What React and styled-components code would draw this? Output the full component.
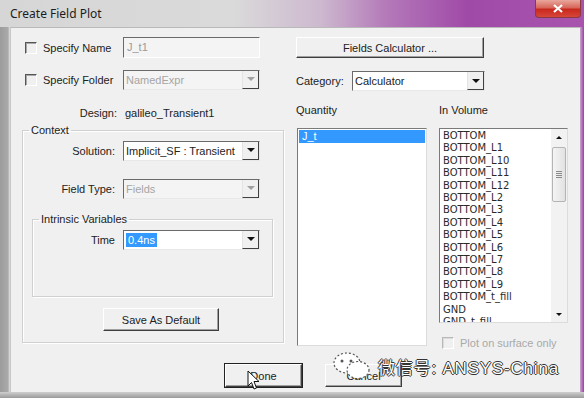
import React from 'react';
import styled, { createGlobalStyle } from 'styled-components';

const GlobalStyle = createGlobalStyle`
  * { box-sizing: border-box; }
  html, body { margin: 0; padding: 0; background: #f0f0f0; }
  body {
    font-family: 'Liberation Sans', Arial, sans-serif;
    font-size: 11px;
    color: #222;
  }
`;

const volumes = [
  'BOTTOM', 'BOTTOM_L1', 'BOTTOM_L10', 'BOTTOM_L11', 'BOTTOM_L12', 'BOTTOM_L2',
  'BOTTOM_L3', 'BOTTOM_L4', 'BOTTOM_L5', 'BOTTOM_L6', 'BOTTOM_L7', 'BOTTOM_L8',
  'BOTTOM_L9', 'BOTTOM_t_fill', 'GND', 'GND_t_fill',
];

function Combo({ value, width, disabled, selected }) {
  return (
    <ComboBox $w={width} $disabled={disabled}>
      <ComboText $disabled={disabled}>
        {selected ? <Selection>{value}</Selection> : value}
      </ComboText>
      <DropButton>
        <Arrow $disabled={disabled} />
      </DropButton>
    </ComboBox>
  );
}

function Check({ label, disabled }) {
  return (
    <CheckRow $disabled={disabled}>
      <CheckBox $disabled={disabled} />
      <span>{label}</span>
    </CheckRow>
  );
}

export default function App() {
  return (
    <>
      <GlobalStyle />
      <Window>
        <TitleBar>
          <Title>Create Field Plot</Title>
          <CloseButton>
            <svg width="10" height="9" viewBox="0 0 10 9">
              <path d="M1 1 L9 8 M9 1 L1 8" stroke="#fff" strokeWidth="2.2" />
            </svg>
          </CloseButton>
        </TitleBar>

        <Middle>
          <LeftFrame />
          <Client>
            <LeftCol>
              <FieldRow $label={101}>
                <Check label="Specify Name" />
                <TextField>J_t1</TextField>
              </FieldRow>
              <FieldRow $label={101} $top={11}>
                <Check label="Specify Folder" />
                <Combo value="NamedExpr" width={137} disabled />
              </FieldRow>
              <InfoRow>
                <InfoLabel>Design:</InfoLabel>
                <span>galileo_Transient1</span>
              </InfoRow>

              <Group $w={262} $top={5} $pb={11}>
                <Legend>Context</Legend>
                <FieldRow $label={100} $top={0}>
                  <RowLabel>Solution:</RowLabel>
                  <Combo value="Implicit_SF : Transient" width={137} />
                </FieldRow>
                <FieldRow $label={100} $top={17}>
                  <RowLabel>Field Type:</RowLabel>
                  <Combo value="Fields" width={137} disabled />
                </FieldRow>

                <Group $w={241} $top={14} $pb={46} $left={9}>
                  <Legend>Intrinsic Variables</Legend>
                  <FieldRow $label={90} $top={0}>
                    <RowLabel>Time</RowLabel>
                    <Combo value="0.4ns" width={137} selected />
                  </FieldRow>
                </Group>

                <Button $w={116} $h={23} $left={80} $top={11}>Save As Default</Button>
              </Group>
            </LeftCol>

            <RightCol>
              <Button $w={188} $h={21}>Fields Calculator ...</Button>
              <CategoryRow>
                <CategoryLabel>Category:</CategoryLabel>
                <Combo value="Calculator" width={133} />
              </CategoryRow>

              <ListsGrid>
                <span>Quantity</span>
                <span>In Volume</span>
                <QuantityList>
                  <SelectedItem>J_t</SelectedItem>
                </QuantityList>
                <VolumeCol>
                  <VolumeList>
                    <Items>
                      {volumes.map(v => <Item key={v}>{v}</Item>)}
                    </Items>
                    <ScrollBar>
                      <ScrollArrow><Arrow $up $small /></ScrollArrow>
                      <Track>
                        <Thumb><Grip /></Thumb>
                      </Track>
                      <ScrollArrow><Arrow $small /></ScrollArrow>
                    </ScrollBar>
                  </VolumeList>
                  <PlotCheck>
                    <Check label="Plot on surface only" disabled />
                  </PlotCheck>
                </VolumeCol>
              </ListsGrid>
            </RightCol>

            <BottomButtons>
              <DefaultButton>Done</DefaultButton>
              <Button $w={77} $h={23}>Cancel</Button>
            </BottomButtons>
          </Client>
          <RightFrame />
        </Middle>
        <BottomFrame />

        <Watermark>
          <svg width="40" height="30" viewBox="0 0 40 30">
            <ellipse cx="15" cy="12" rx="13" ry="10" fill="#fff" stroke="#555" strokeWidth="1.2" strokeDasharray="2 2" />
            <ellipse cx="26" cy="19" rx="11" ry="8.5" fill="#fff" stroke="#555" strokeWidth="1.2" strokeDasharray="2 2" />
            <circle cx="10" cy="10" r="1.5" fill="#555" />
            <circle cx="19" cy="10" r="1.5" fill="#555" />
          </svg>
          <WatermarkText>微信号: ANSYS-China</WatermarkText>
        </Watermark>

        <Cursor width="14" height="21" viewBox="0 0 14 21">
          <path d="M1 1 L1 16 L4.5 12.5 L7 19 L9.5 18 L7 11.5 L12 11.5 Z" fill="#fff" stroke="#111" strokeWidth="1" strokeLinejoin="round" />
        </Cursor>
      </Window>
    </>
  );
}

const Window = styled.div`
  position: relative;
  width: 584px;
  height: 398px;
  display: flex;
  flex-direction: column;
  overflow: hidden;
  background: #d8d8d8;
`;

const TitleBar = styled.div`
  height: 27px;
  display: flex;
  align-items: flex-start;
  padding-left: 10px;
  background: linear-gradient(90deg, #d6d6d6 0%, #dadada 40%, #cdb8cf 55%, #b47ab9 66%, #a04aa8 80%, #a854ae 100%);
`;

const Title = styled.div`
  font-family: 'Noto Sans', 'Liberation Sans', sans-serif;
  font-size: 12px;
  color: #1c1c1c;
  margin-top: 5px;
`;

const CloseButton = styled.div`
  margin-left: auto;
  margin-right: 3px;
  width: 46px;
  height: 18px;
  display: flex;
  align-items: center;
  justify-content: center;
  border-radius: 0 0 4px 4px;
  border: 1px solid #8a3a40;
  border-top: none;
  background: linear-gradient(180deg, #e9a79d 0%, #d7675a 45%, #c8291d 55%, #d8463a 100%);
`;

const Middle = styled.div`
  flex: 1;
  display: flex;
`;

const LeftFrame = styled.div`
  width: 10px;
  background: linear-gradient(90deg, #9c9c9c, #aaaaaa 80%, #e6e6e6);
`;

const RightFrame = styled.div`
  width: 4px;
  background: linear-gradient(90deg, #c9a7cc, #9b3fa3);
`;

const BottomFrame = styled.div`
  height: 6px;
  background: linear-gradient(180deg, #cfcfcf, #9a9a9a);
`;

const Client = styled.div`
  flex: 1;
  background: #f0f0f0;
  border-top: 1px solid #b9b9b9;
  border-left: 1px solid #c8c8c8;
  padding: 9px 0 0 11px;
  display: grid;
  grid-template-columns: 262px 272px;
  grid-template-rows: auto auto;
  column-gap: 12px;
  align-content: start;
`;

const LeftCol = styled.div`
  display: flex;
  flex-direction: column;
`;

const RightCol = styled.div`
  display: flex;
  flex-direction: column;
`;

const FieldRow = styled.div`
  display: grid;
  grid-template-columns: ${p => p.$label}px auto;
  align-items: center;
  height: 21px;
  margin-top: ${p => p.$top || 0}px;
`;

const RowLabel = styled.span`
  text-align: right;
  padding-right: 8px;
`;

const CheckRow = styled.label`
  display: flex;
  align-items: center;
  gap: 6px;
  padding-left: 3px;
  color: ${p => (p.$disabled ? '#a9a9a9' : '#222')};
`;

const CheckBox = styled.span`
  width: 12px;
  height: 12px;
  border-top: 1px solid ${p => (p.$disabled ? '#b8b8b8' : '#555')};
  border-left: 1px solid ${p => (p.$disabled ? '#b8b8b8' : '#555')};
  border-right: 1px solid #fff;
  border-bottom: 1px solid #fff;
  box-shadow: inset 1px 1px ${p => (p.$disabled ? '#dcdcdc' : '#a8a8a8')};
`;

const TextField = styled.div`
  width: 137px;
  height: 21px;
  padding: 3px 3px;
  color: #9a9a9a;
  background: #f4f4f4;
  border-top: 1px solid #6a6a6a;
  border-left: 1px solid #6a6a6a;
  border-right: 1px solid #fff;
  border-bottom: 1px solid #fff;
`;

const ComboBox = styled.div`
  width: ${p => p.$w}px;
  height: 20px;
  display: flex;
  background: ${p => (p.$disabled ? '#f4f4f4' : '#fff')};
  border-top: 1px solid #6a6a6a;
  border-left: 1px solid #6a6a6a;
  border-right: 1px solid #e8e8e8;
  border-bottom: 1px solid #e8e8e8;
`;

const ComboText = styled.div`
  flex: 1;
  display: flex;
  align-items: center;
  padding-left: 2px;
  white-space: nowrap;
  overflow: hidden;
  color: ${p => (p.$disabled ? '#a5a5a5' : '#222')};
`;

const Selection = styled.span`
  background: #3399ff;
  color: #fff;
  padding: 1px 2px;
`;

const DropButton = styled.div`
  width: 17px;
  display: flex;
  align-items: center;
  justify-content: center;
  background: #f0f0f0;
  border-left: 1px solid #e4e4e4;
  border-right: 1px solid #404040;
  border-bottom: 1px solid #404040;
`;

const Arrow = styled.span`
  width: 0;
  height: 0;
  border-left: ${p => (p.$small ? 3 : 4)}px solid transparent;
  border-right: ${p => (p.$small ? 3 : 4)}px solid transparent;
  ${p => (p.$up ? 'border-bottom' : 'border-top')}: ${p => (p.$small ? 3 : 4)}px solid ${p => (p.$disabled ? '#a0a0a0' : '#111')};
`;

const InfoRow = styled.div`
  display: grid;
  grid-template-columns: 101px auto;
  margin-top: 16px;
  height: 13px;
  align-items: center;
  & > span:last-child { padding-left: 2px; }
`;

const InfoLabel = styled.span`
  text-align: right;
  padding-right: 6px;
`;

const Group = styled.fieldset`
  width: ${p => p.$w}px;
  margin: ${p => p.$top}px 0 0 ${p => p.$left || 0}px;
  padding: 3px 0 ${p => p.$pb}px 0;
  border: 1px solid #d0d0d0;
  box-shadow: 1px 1px 0 #fff, inset 1px 1px 0 #fff;
  min-width: 0;
`;

const Legend = styled.legend`
  margin-left: 6px;
  padding: 0 2px;
  font-size: 11px;
  line-height: 13px;
`;

const Button = styled.div`
  width: ${p => p.$w}px;
  height: ${p => p.$h}px;
  margin: ${p => p.$top || 0}px 0 0 ${p => p.$left || 0}px;
  display: flex;
  align-items: center;
  justify-content: center;
  background: #f0f0f0;
  border: 1px solid;
  border-color: #fff #3e3e3e #3e3e3e #fff;
  box-shadow: inset -1px -1px 0 #a0a0a0;
  color: #222;
`;

const DefaultButton = styled(Button).attrs({ $w: 77, $h: 23 })`
  outline: 1px solid #222;
  outline-offset: 0;
`;

const BottomButtons = styled.div`
  grid-column: 1 / -1;
  display: flex;
  gap: 23px;
  padding-left: 203px;
  margin-top: 15px;
`;

const CategoryRow = styled.div`
  display: flex;
  align-items: center;
  margin-top: 13px;
`;

const CategoryLabel = styled.span`
  width: 56px;
`;

const ListsGrid = styled.div`
  display: grid;
  grid-template-columns: 143px 129px;
  grid-template-rows: 12px auto;
  row-gap: 12px;
  margin-top: 13px;
`;

const ListBox = styled.div`
  background: #fff;
  border-top: 1px solid #7a7a7a;
  border-left: 1px solid #7a7a7a;
  border-right: 1px solid #dcdcdc;
  border-bottom: 1px solid #dcdcdc;
`;

const QuantityList = styled(ListBox)`
  width: 130px;
  height: 218px;
  margin-left: 1px;
  padding: 1px;
`;

const SelectedItem = styled.div`
  height: 13px;
  line-height: 13px;
  padding-left: 3px;
  background: #3399ff;
  color: #fff;
`;

const VolumeCol = styled.div`
  display: flex;
  flex-direction: column;
`;

const VolumeList = styled(ListBox)`
  width: 129px;
  height: 195px;
  display: flex;
  overflow: hidden;
`;

const Items = styled.div`
  flex: 1;
  padding: 1px 0 0 3px;
  overflow: hidden;
`;

const Item = styled.div`
  font-family: 'DejaVu Sans', sans-serif;
  font-size: 10px;
  line-height: 12.4px;
  color: #2a2a2a;
  white-space: nowrap;
`;

const ScrollBar = styled.div`
  width: 16px;
  display: flex;
  flex-direction: column;
  background: #f2f2f2;
`;

const ScrollArrow = styled.div`
  height: 16px;
  display: flex;
  align-items: center;
  justify-content: center;
`;

const Track = styled.div`
  flex: 1;
  padding: 2px 1px 0;
`;

const Thumb = styled.div`
  height: 55px;
  border: 1px solid #b4b4b4;
  border-radius: 2px;
  background: linear-gradient(90deg, #f4f4f4, #e2e2e2);
  display: flex;
  align-items: center;
  justify-content: center;
`;

const Grip = styled.div`
  width: 6px;
  height: 7px;
  background: repeating-linear-gradient(180deg, #8a8a8a 0 1px, transparent 1px 2px);
`;

const PlotCheck = styled.div`
  margin-top: 14px;
`;

const Watermark = styled.div`
  position: absolute;
  left: 332px;
  top: 351px;
  display: flex;
  align-items: center;
  gap: 6px;
`;

const WatermarkText = styled.span`
  font-family: 'Liberation Sans', 'Noto Sans CJK SC', sans-serif;
  font-size: 17px;
  letter-spacing: 0.8px;
  color: #fff;
  text-shadow: 1px 0 0 #333, -1px 0 0 #333, 0 1px 0 #333, 0 -1px 0 #333;
  white-space: nowrap;
`;

const Cursor = styled.svg`
  position: absolute;
  left: 247px;
  top: 370px;
`;
